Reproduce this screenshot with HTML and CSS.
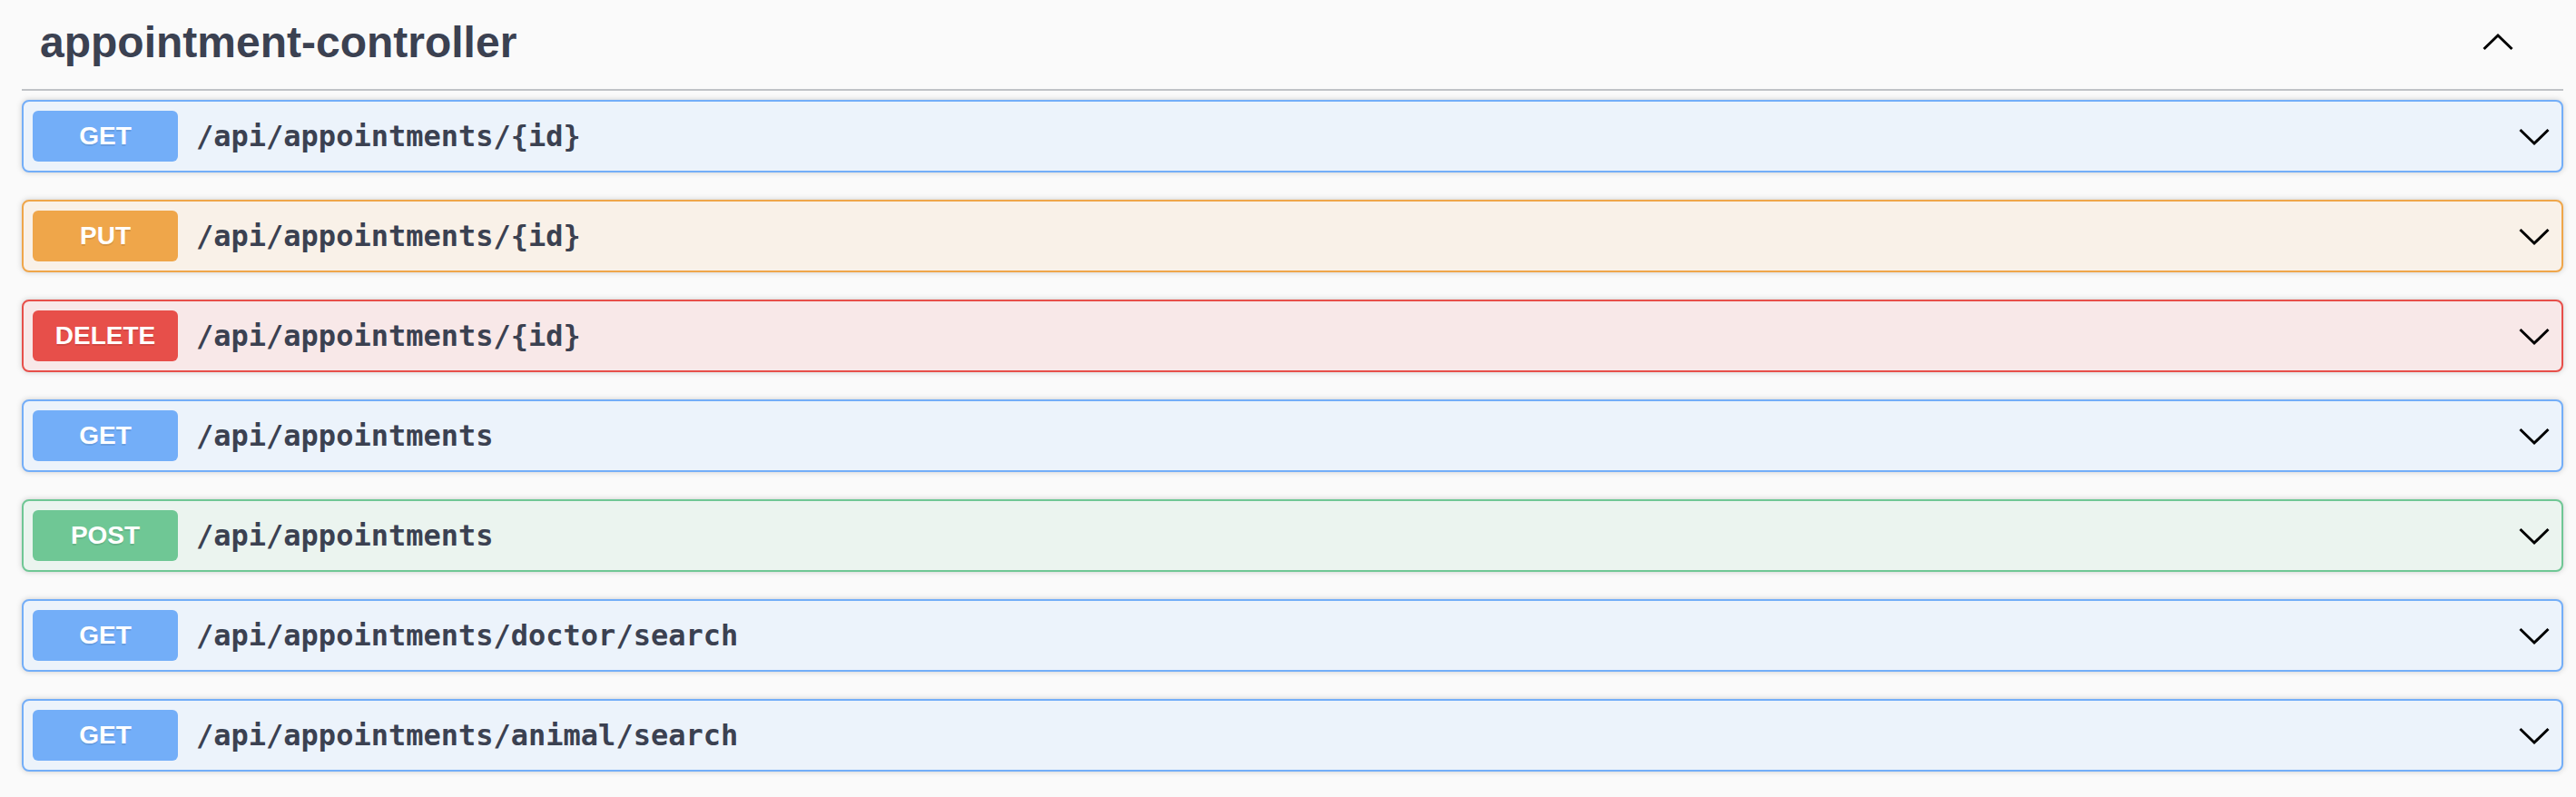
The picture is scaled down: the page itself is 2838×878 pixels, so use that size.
FILE: index.html
```html
<!DOCTYPE html>
<html lang="en">
<head>
<meta charset="utf-8">
<title>appointment-controller</title>
<link rel="stylesheet" href="styles.css">
</head>
<body>
<div class="wrapper">
  <section class="tag-section">
    <h3 class="opblock-tag">
      <span class="tag-name">appointment-controller</span>
      <svg class="arrow arrow-up" viewBox="0 0 40 40" aria-hidden="true"><polyline points="4.5,13 20,28 35.5,13"/></svg>
    </h3>

    <div class="opblock get">
      <span class="method">GET</span>
      <span class="path">/api/appointments/{id}</span>
      <svg class="arrow" viewBox="0 0 40 40" aria-hidden="true"><polyline points="4.5,13 20,28 35.5,13"/></svg>
    </div>
    <div class="opblock put">
      <span class="method">PUT</span>
      <span class="path">/api/appointments/{id}</span>
      <svg class="arrow" viewBox="0 0 40 40" aria-hidden="true"><polyline points="4.5,13 20,28 35.5,13"/></svg>
    </div>
    <div class="opblock delete">
      <span class="method">DELETE</span>
      <span class="path">/api/appointments/{id}</span>
      <svg class="arrow" viewBox="0 0 40 40" aria-hidden="true"><polyline points="4.5,13 20,28 35.5,13"/></svg>
    </div>
    <div class="opblock get">
      <span class="method">GET</span>
      <span class="path">/api/appointments</span>
      <svg class="arrow" viewBox="0 0 40 40" aria-hidden="true"><polyline points="4.5,13 20,28 35.5,13"/></svg>
    </div>
    <div class="opblock post">
      <span class="method">POST</span>
      <span class="path">/api/appointments</span>
      <svg class="arrow" viewBox="0 0 40 40" aria-hidden="true"><polyline points="4.5,13 20,28 35.5,13"/></svg>
    </div>
    <div class="opblock get">
      <span class="method">GET</span>
      <span class="path">/api/appointments/doctor/search</span>
      <svg class="arrow" viewBox="0 0 40 40" aria-hidden="true"><polyline points="4.5,13 20,28 35.5,13"/></svg>
    </div>
    <div class="opblock get">
      <span class="method">GET</span>
      <span class="path">/api/appointments/animal/search</span>
      <svg class="arrow" viewBox="0 0 40 40" aria-hidden="true"><polyline points="4.5,13 20,28 35.5,13"/></svg>
    </div>
  </section>
</div>
</body>
</html>
```

FILE: styles.css
```css
html, body {
  margin: 0;
  padding: 0;
  background: #fafafa;
}

body {
  font-family: "Liberation Sans", Arial, sans-serif;
  color: #3b4151;
}

.wrapper {
  padding: 0 14px 0 24px;
}

.opblock-tag {
  display: flex;
  align-items: center;
  justify-content: space-between;
  margin: 0 0 10px;
  padding: 20px 40px 24px 20px;
  font-size: 48px;
  line-height: 54px;
  font-weight: 700;
  color: #3b4151;
  border-bottom: 2px solid rgba(59, 65, 81, 0.3);
}

.arrow {
  width: 40px;
  height: 40px;
  flex: none;
  fill: none;
  stroke: #000;
  stroke-width: 3;
  stroke-linejoin: miter;
  stroke-linecap: butt;
}

.arrow-up {
  margin-right: 12px;
  transform: rotate(180deg);
}

.opblock {
  display: flex;
  align-items: center;
  margin: 0 0 30px;
  padding: 10px;
  border: 2px solid;
  border-radius: 8px;
  box-shadow: 0 0 6px rgba(0, 0, 0, 0.19);
}

.opblock .arrow {
  margin-left: auto;
}

.method {
  display: flex;
  align-items: center;
  justify-content: center;
  min-width: 160px;
  height: 56px;
  border-radius: 6px;
  font-size: 28px;
  font-weight: 700;
  color: #fff;
  text-shadow: 0 2px 0 rgba(0, 0, 0, 0.1);
}

.path {
  padding: 0 20px;
  font-family: "DejaVu Sans Mono", "Liberation Mono", monospace;
  font-size: 32px;
  font-weight: 700;
  color: #3b4151;
}

.get { background: #ecf3fb; border-color: #73aef8; }
.get .method { background: #73aef8; }

.put { background: #f9f1e8; border-color: #efa64a; }
.put .method { background: #efa64a; }

.delete { background: #f8e8e8; border-color: #e74f4a; }
.delete .method { background: #e74f4a; }

.post { background: #ebf4ef; border-color: #6fc795; }
.post .method { background: #6fc795; }
```
